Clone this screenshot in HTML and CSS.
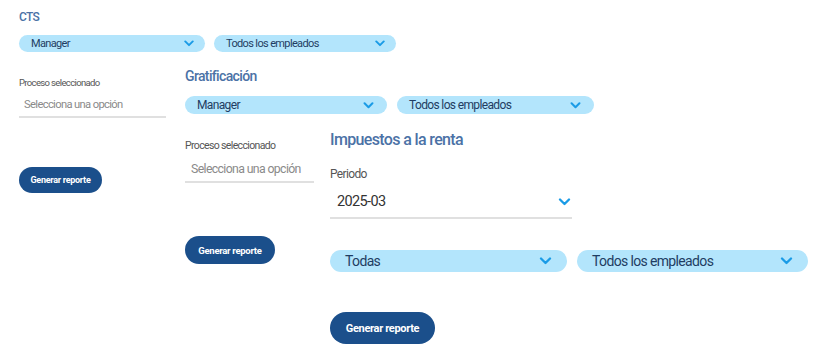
FILE: index.html
```html
<!DOCTYPE html>
<html lang="es">
<head>
    <meta charset="UTF-8">
    <meta name="viewport" content="width=device-width, initial-scale=1.0">
    <title>Reportes</title>
    <link rel="stylesheet" href="styles.css">
</head>
<body>
    <div class="panel panel-cts">
        <h3 class="panel-title">CTS</h3>
        <div class="pill-row">
            <div class="pill pill-a">Manager
                <svg class="chev" viewBox="0 0 12 8"><path d="M1.5 1.5 L6 6 L10.5 1.5"/></svg>
            </div>
            <div class="pill pill-b">Todos los empleados
                <svg class="chev" viewBox="0 0 12 8"><path d="M1.5 1.5 L6 6 L10.5 1.5"/></svg>
            </div>
        </div>
        <div class="panel-body">
            <div class="side">
                <label class="side-label">Proceso seleccionado</label>
                <div class="field placeholder">Selecciona una opción</div>
                <button class="btn" type="button">Generar reporte</button>
            </div>

            <div class="panel panel-grat">
                <h3 class="panel-title">Gratificación</h3>
                <div class="pill-row">
                    <div class="pill pill-a">Manager
                        <svg class="chev" viewBox="0 0 12 8"><path d="M1.5 1.5 L6 6 L10.5 1.5"/></svg>
                    </div>
                    <div class="pill pill-b">Todos los empleados
                        <svg class="chev" viewBox="0 0 12 8"><path d="M1.5 1.5 L6 6 L10.5 1.5"/></svg>
                    </div>
                </div>
                <div class="panel-body">
                    <div class="side">
                        <label class="side-label">Proceso seleccionado</label>
                        <div class="field placeholder">Selecciona una opción</div>
                        <button class="btn" type="button">Generar reporte</button>
                    </div>

                    <div class="panel panel-isr">
                        <h3 class="panel-title">Impuestos a la renta</h3>
                        <label class="side-label">Periodo</label>
                        <div class="field select-field">2025-03
                            <svg class="chev" viewBox="0 0 12 8"><path d="M1.5 1.5 L6 6 L10.5 1.5"/></svg>
                        </div>
                        <div class="pill-row">
                            <div class="pill pill-a">Todas
                                <svg class="chev" viewBox="0 0 12 8"><path d="M1.5 1.5 L6 6 L10.5 1.5"/></svg>
                            </div>
                            <div class="pill pill-b">Todos los empleados
                                <svg class="chev" viewBox="0 0 12 8"><path d="M1.5 1.5 L6 6 L10.5 1.5"/></svg>
                            </div>
                        </div>
                        <button class="btn" type="button">Generar reporte</button>
                    </div>
                </div>
            </div>
        </div>
    </div>
</body>
</html>
```

FILE: styles.css
```css
/* Base */
* { margin: 0; padding: 0; box-sizing: border-box; }
body {
    font-family: Roboto, "Noto Sans", Arial, sans-serif;
    background-color: #ffffff;
    color: #333;
    letter-spacing: -0.04em;
    white-space: nowrap;
}

/* Panels */
.panel { display: flex; flex-direction: column; align-items: flex-start; }
.panel-title { color: #4b72a6; font-weight: 500; }
.pill-row { display: flex; }
.panel-body { display: flex; align-items: flex-start; }
.side { display: flex; flex-direction: column; align-items: flex-start; flex-shrink: 0; }
.side-label { color: #555; }

.pill {
    display: flex;
    align-items: center;
    justify-content: space-between;
    background-color: #b3e5fc;
    color: #1f3d63;
    border-radius: 999px;
}
.chev { flex-shrink: 0; fill: none; stroke: #1a9be6; stroke-width: 2.3; stroke-linecap: round; stroke-linejoin: round; }

.field { border-bottom: 2px solid #e0e0e0; }
.placeholder { color: #8a8a8a; }

.btn {
    border: none;
    background-color: #1b4f8b;
    color: #fff;
    font-family: inherit;
    font-weight: 700;
    letter-spacing: -0.03em;
    border-radius: 999px;
    cursor: pointer;
}

/* CTS */
.panel-cts { padding: 10px 0 0 19px; }
.panel-cts > .panel-title { font-size: 12px; line-height: 14px; }
.panel-cts > .pill-row { margin-top: 11px; gap: 9px; }
.panel-cts > .pill-row .pill { height: 17px; font-size: 11px; padding: 0 11px 0 12px; }
.panel-cts > .pill-row .pill-a { width: 186px; }
.panel-cts > .pill-row .pill-b { width: 182px; }
.panel-cts > .pill-row .chev { width: 10px; height: 7px; }
.panel-cts > .panel-body { margin-top: 14px; }
.panel-cts > .panel-body > .side { width: 166px; padding-top: 11px; }
.panel-cts > .panel-body > .side .side-label { font-size: 9.5px; line-height: 11px; }
.panel-cts > .panel-body > .side .field { width: 147px; margin-top: 10px; padding: 0 5px 4px; font-size: 11.2px; line-height: 14px; }
.panel-cts > .panel-body > .side .btn { margin-top: 49px; width: 83px; height: 26px; font-size: 9px; }

/* Gratificacion */
.panel-grat { padding-top: 2px; }
.panel-grat > .panel-title { font-size: 14px; line-height: 17px; }
.panel-grat > .pill-row { margin-top: 11px; gap: 10px; }
.panel-grat > .pill-row .pill { height: 18px; font-size: 12px; padding: 0 13px 0 12px; }
.panel-grat > .pill-row .pill-a { width: 202px; }
.panel-grat > .pill-row .pill-b { width: 197px; }
.panel-grat > .pill-row .chev { width: 11px; height: 7px; }
.panel-grat > .panel-body { margin-top: 14px; }
.panel-grat > .panel-body > .side { width: 145px; padding-top: 12px; }
.panel-grat > .panel-body > .side .side-label { font-size: 10.5px; line-height: 12px; }
.panel-grat > .panel-body > .side .field { width: 129px; margin-top: 10px; padding: 0 6px 4px; font-size: 12.3px; line-height: 15px; }
.panel-grat > .panel-body > .side .btn { margin-top: 53px; width: 90px; height: 28px; font-size: 9.5px; }

/* Impuestos a la renta */
.panel-isr { padding-top: 2px; }
.panel-isr > .panel-title { font-size: 16px; line-height: 19px; }
.panel-isr > .side-label { margin-top: 18px; font-size: 12px; line-height: 15px; }
.select-field {
    display: flex;
    align-items: center;
    justify-content: space-between;
    width: 242px;
    margin-top: 11px;
    padding: 0 1px 6px 7px;
    font-size: 14.5px;
    line-height: 18px;
    color: #333;
}
.select-field .chev { width: 13px; height: 8px; }
.panel-isr > .pill-row { margin-top: 31px; gap: 10px; }
.panel-isr > .pill-row .pill { height: 22px; font-size: 14px; padding: 0 15px 0 15px; }
.panel-isr > .pill-row .pill-a { width: 237px; }
.panel-isr > .pill-row .pill-b { width: 231px; }
.panel-isr > .pill-row .chev { width: 13px; height: 8px; }
.panel-isr > .btn { margin-top: 40px; width: 105px; height: 32px; font-size: 11px; }
```
